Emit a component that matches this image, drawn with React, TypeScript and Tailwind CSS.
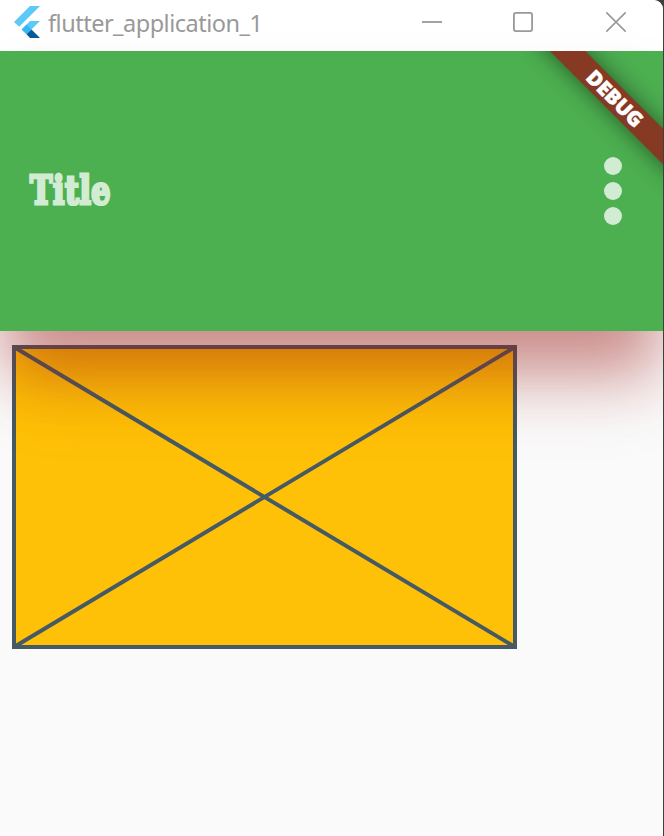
function TitleBar() {
  return (
    <header className="flex h-[51px] shrink-0 items-start rounded-tr-[9px] bg-white text-[#999999]">
      <svg className="ml-3.5 mt-1.5 h-8 w-[26px] shrink-0" viewBox="0 0 26 32">
        <path d="M16 0h10L5.2 20.8L0 16z" fill="#5dc9f8" />
        <path d="M16 15h10l-8.6 8.5l-4.7 4.8L7.7 23.4z" fill="#5dc9f8" />
        <path d="M7.7 23.4l4.9-4.9l4.9 4.9l-4.9 4.9z" fill="#35b7f1" />
        <path d="M12.6 28.3l4.9-4.9L26 32H16z" fill="#075b9d" />
      </svg>
      <h1 className="ml-2 mt-[7px] flex-1 whitespace-nowrap font-['Noto_Sans',sans-serif] text-[23.5px] leading-8 tracking-[-0.5px]">
        flutter_application_1
      </h1>
      <div className="mr-[37px] mt-3 flex w-[204px] shrink-0">
        <svg className="h-5 w-5" viewBox="0 0 20 20">
          <path d="M0 10h20" stroke="currentColor" strokeWidth="1.8" />
        </svg>
        <svg className="ml-[71px] h-5 w-5" viewBox="0 0 20 20" fill="none">
          <rect x=".9" y=".9" width="18.2" height="18.2" rx="2" stroke="currentColor" strokeWidth="1.8" />
        </svg>
        <svg className="ml-[73px] h-5 w-5" viewBox="0 0 20 20">
          <path d="M.3.3l19.4 19.4M19.7.3L.3 19.7" stroke="currentColor" strokeWidth="1.6" />
        </svg>
      </div>
    </header>
  );
}

function AppBar() {
  return (
    <section className="relative z-10 flex h-[280px] shrink-0 items-center justify-between bg-[#4caf50] pl-[30px] pr-[41px] shadow-[0_44px_56px_-6px_rgba(155,28,22,0.4),0_68px_70px_-8px_rgba(155,28,22,0.14)]">
      <h2 className="origin-left scale-x-[0.75] -translate-y-px font-['DejaVu_Serif',serif] text-[40px] font-bold leading-none tracking-[0.8px] text-[#d2ebd3] [-webkit-text-stroke:3.2px_#d2ebd3] [stroke-linejoin:round]">
        Title
      </h2>
      <div className="flex flex-col gap-[7px]">
        <span className="size-[18px] rounded-full bg-[#d2ebd3]" />
        <span className="size-[18px] rounded-full bg-[#d2ebd3]" />
        <span className="size-[18px] rounded-full bg-[#d2ebd3]" />
      </div>
      <div className="absolute inset-0 overflow-hidden">
        <div className="absolute left-[515px] top-[35px] flex h-[25px] w-[200px] rotate-45 items-center justify-center bg-[#863923] pb-px font-['Open_Sans',sans-serif] text-[20.5px] font-extrabold leading-none text-white shadow-[0_0_22px_rgba(0,0,0,0.5)] [-webkit-text-stroke:0.5px_white]">
          DEBUG
        </div>
      </div>
    </section>
  );
}

function Placeholder() {
  return (
    <svg className="ml-3 mt-3.5 h-[304px] w-[505px]" viewBox="0 0 505 304">
      <path d="M0 0h505v304H0z" fill="#ffc107" />
      <path d="M2 2h501v300H2zL503 302M503 2L2 302" fill="none" stroke="#455a64" strokeWidth="4" />
    </svg>
  );
}

export default function App() {
  return (
    <div className="h-[836px] w-[664px] overflow-hidden bg-[#3f3f3f] pr-px">
      <div className="flex h-full flex-col overflow-hidden rounded-tr-[9px] bg-[#fafafa]">
        <TitleBar />
        <AppBar />
        <main>
          <Placeholder />
        </main>
      </div>
    </div>
  );
}
